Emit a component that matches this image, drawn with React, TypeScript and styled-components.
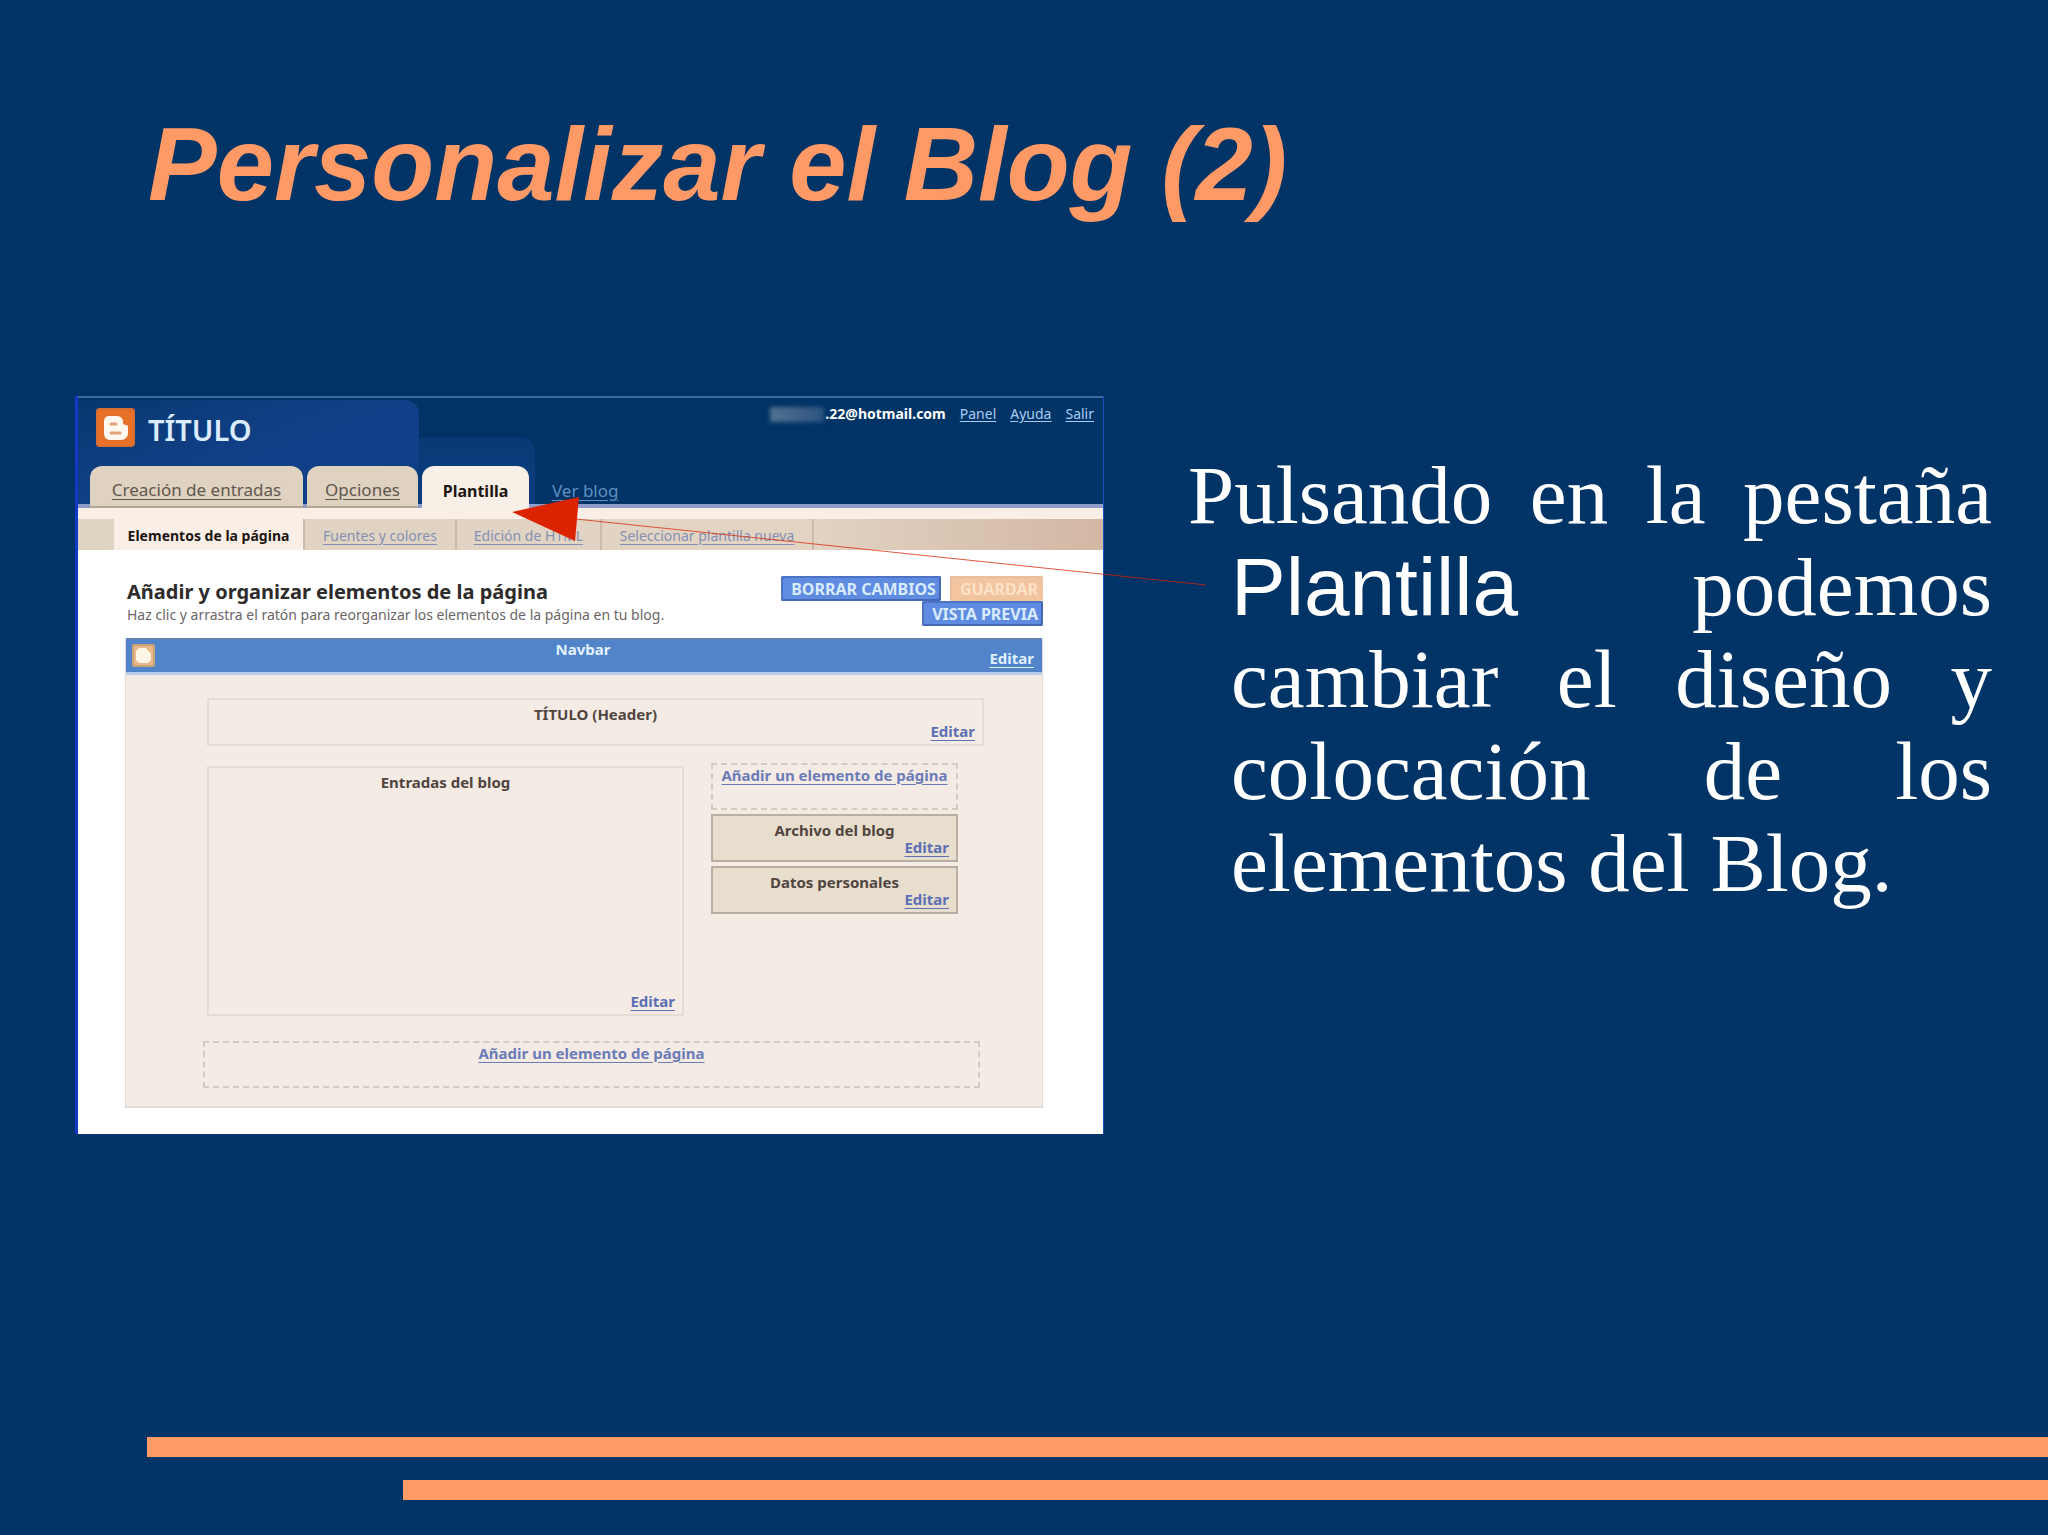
import React from "react";
import styled, { createGlobalStyle, css } from "styled-components";

const GlobalStyle = createGlobalStyle`
  *, *::before, *::after { box-sizing: border-box; }
  body { margin: 0; background: #003366; }
  h1, h2, h3, p { margin: 0; }
`;

const uiFont = `"Noto Sans", "Open Sans", sans-serif`;

const Slide = styled.main`
  display: flex;
  flex-direction: column;
  min-height: 100vh;
  background: #003366;
  overflow: hidden;
`;

const SlideTitle = styled.h1`
  padding: 105px 56px 0 148px;
  color: #ff9966;
  font: italic bold 103px/120px "Liberation Sans", Arial, sans-serif;
`;

const Content = styled.div`
  display: grid;
  grid-template-columns: minmax(0, 1029fr) minmax(0, 804fr);
  column-gap: 84px;
  align-items: start;
  padding: 171px 56px 0 75px;
`;

const Explanation = styled.p`
  margin-top: 53px;
  padding-left: 43px;
  text-indent: -43px;
  text-align: justify;
  color: #ffffff;
  font: 83px/92px "Liberation Serif", "Times New Roman", serif;
`;

const Term = styled.span`
  font-family: "Liberation Sans", Arial, sans-serif;
  font-size: 82px;
  line-height: 1;
`;

const SlideFooter = styled.footer`
  display: flex;
  flex-direction: column;
  gap: 23px;
  margin-top: auto;
  padding: 40px 0 35px 147px;
`;

const Bar = styled.div<{ $inset?: number }>`
  height: 20px;
  margin-left: ${(p) => p.$inset ?? 0}px;
  background: #ff9966;
`;

const Figure = styled.section`
  position: relative;
  border-left: 3px solid #1238c8;
  border-right: 1px solid #1a4fc0;
  background: #ffffff;
  font-family: ${uiFont};
`;

const Arrow = styled.svg`
  position: absolute;
  left: 432px;
  top: 96px;
  width: 700px;
  height: 100px;
  pointer-events: none;
`;

const AppHeader = styled.header`
  position: relative;
  display: flex;
  flex-direction: column;
  justify-content: space-between;
  height: 112px;
  border-top: 2px solid #3f6b9c;
  background: #003366;
  box-shadow: inset 0 -4px 0 #8d9cc9;
  isolation: isolate;
`;

const Glow = styled.span<{ $left: number; $width: number; $top: number; $color: string }>`
  position: absolute;
  z-index: -1;
  left: ${(p) => p.$left}px;
  top: ${(p) => p.$top}px;
  bottom: 4px;
  width: ${(p) => p.$width}px;
  border-top-right-radius: 14px;
  background: ${(p) => p.$color};
`;

const HeaderTop = styled.div`
  display: flex;
  justify-content: space-between;
  align-items: flex-start;
  padding: 0 9px 0 18px;
`;

const Brand = styled.div`
  display: flex;
  align-items: flex-start;
  gap: 13px;
  padding-top: 10px;
`;

const BrandName = styled.h2`
  color: #dcecff;
  font: 600 29px/44px ${uiFont};
`;

const Account = styled.nav`
  display: flex;
  align-items: center;
  gap: 14px;
  padding-top: 6px;
  font-size: 14px;
  line-height: 20px;
`;

const Email = styled.span`
  display: flex;
  align-items: center;
  color: #ffffff;
  font-weight: 700;
`;

const Redacted = styled.span`
  width: 54px;
  height: 15px;
  margin-right: 1px;
  background: linear-gradient(90deg, #527290, #3d6088 60%, #2b5280);
  filter: blur(2px);
`;

const HeaderLink = styled.a`
  color: #a9cdf2;
  text-underline-offset: 2px;
`;

const Tabs = styled.nav`
  display: flex;
  align-items: flex-end;
  gap: 4px;
  padding-left: 12px;
`;

const tabBox = css`
  display: flex;
  align-items: center;
  justify-content: center;
  height: 42px;
  padding-top: 8px;
  font-size: 17px;
  line-height: 24px;
  text-underline-offset: 3px;
`;

const Tab = styled.a<{ $width: number; $active?: boolean }>`
  ${tabBox}
  width: ${(p) => p.$width}px;
  border-radius: 12px 12px 0 0;
  border-bottom: ${(p) => (p.$active ? "0" : "2px solid #b3a695")};
  background: ${(p) => (p.$active ? "#f8efe6" : "#dfd2c0")};
  color: ${(p) => (p.$active ? "#1c1512" : "#5f574f")};
  font-weight: ${(p) => (p.$active ? 700 : 400)};
  font-size: ${(p) => (p.$active ? 16 : 17)}px;
  text-decoration: ${(p) => (p.$active ? "none" : "underline")};
`;

const PlainTab = styled.a`
  ${tabBox}
  padding-left: 19px;
  color: #5f8fc0;
`;

const SubNav = styled.nav`
  display: flex;
  height: 42px;
  padding-left: 36px;
  border-top: 11px solid #faefe6;
  background: linear-gradient(90deg, #dfd3c2 0, #e3d4c4 720px, #d2b7a4 100%);
`;

const SubTab = styled.a<{ $width: number; $active?: boolean }>`
  display: flex;
  align-items: center;
  justify-content: center;
  width: ${(p) => p.$width}px;
  padding-top: 2px;
  border-right: 2px solid #cdbcab;
  background: ${(p) => (p.$active ? "#faefe6" : "transparent")};
  color: ${(p) => (p.$active ? "#1c1512" : "#8390b5")};
  font-size: 14px;
  line-height: 20px;
  font-weight: ${(p) => (p.$active ? 700 : 400)};
  text-decoration: ${(p) => (p.$active ? "none" : "underline")};
  text-underline-offset: 3px;
`;

const Body = styled.div`
  padding: 26px 60px 26px 47px;
`;

const Toolbar = styled.div`
  display: flex;
  justify-content: space-between;
  height: 50px;
  margin-bottom: 12px;
  padding-left: 2px;
`;

const Heading = styled.h3`
  color: #2e2b2b;
  font: 700 20px/32px ${uiFont};
  white-space: nowrap;
`;

const Hint = styled.p`
  color: #6b6666;
  font-size: 14px;
  line-height: 14px;
  white-space: nowrap;
`;

const Actions = styled.div`
  display: flex;
  flex-direction: column;
  align-items: flex-end;
`;

const ActionRow = styled.div`
  display: flex;
  gap: 9px;
`;

const ActionButton = styled.button<{ $muted?: boolean }>`
  height: 25px;
  padding: 0 5px 0 10px;
  border: 0;
  border-radius: 2px;
  background: ${(p) => (p.$muted ? "#f3c4a0" : "#5f8be0")};
  box-shadow: ${(p) =>
    p.$muted ? "inset 2px 2px 0 #e9bd9e" : "inset 2px 2px 0 #4d74c4, inset -2px -2px 0 #4467b8"};
  color: ${(p) => (p.$muted ? "#fbe3c8" : "#d9ecff")};
  font: 700 16px/24px ${uiFont};
  white-space: nowrap;
`;

const Panel = styled.div`
  border: solid #dfdcd8;
  border-width: 0 1px 2px 1px;
  background: #f5ebe5;
`;

const EditLink = styled.a<{ $light?: boolean }>`
  grid-area: 1 / 1;
  align-self: end;
  justify-self: end;
  color: ${(p) => (p.$light ? "#dff0ff" : "#5d70b4")};
  text-underline-offset: 3px;
`;

const BlockTitle = styled.span`
  grid-area: 1 / 1;
  justify-self: center;
  align-self: start;
`;

const blockBase = css`
  display: grid;
  font-size: 15px;
  line-height: 18px;
  font-weight: 700;
`;

const NavbarBlock = styled.div`
  ${blockBase}
  height: 37px;
  padding: 0 8px 5px 6px;
  border-top: 2px solid #6385b5;
  border-bottom: 3px solid #b9cfee;
  background: #5184c9;
  color: #e3f1ff;
`;

const NavbarIcon = styled.svg`
  grid-area: 1 / 1;
  align-self: end;
  width: 23px;
  height: 23px;
`;

const Layout = styled.div`
  padding: 23px 58px 18px 77px;
`;

const Block = styled.div<{ $height: number; $solid?: boolean }>`
  ${blockBase}
  height: ${(p) => p.$height}px;
  padding: 5px 7px 4px;
  border: 2px solid ${(p) => (p.$solid ? "#b8aea2" : "#e6dcd7")};
  background: ${(p) => (p.$solid ? "#e8decd" : "transparent")};
  color: #51453f;
`;

const AddBlock = styled.div`
  display: flex;
  align-items: flex-start;
  justify-content: center;
  height: 47px;
  padding-top: 1px;
  border: 2px dashed #d6cbc0;
  font-size: 15px;
  line-height: 18px;
  font-weight: 700;
`;

const AddLink = styled.a`
  color: #6a7cb8;
  text-underline-offset: 3px;
  white-space: nowrap;
`;

const HeaderSlot = styled.div`
  padding-left: 4px;
`;

const Columns = styled.div`
  display: grid;
  grid-template-columns: minmax(0, 1fr) 247px;
  column-gap: 27px;
  padding: 17px 26px 25px 4px;
`;

const MainColumn = styled.div`
  padding-top: 3px;
`;

const SideColumn = styled.div`
  display: flex;
  flex-direction: column;
  gap: 4px;
`;

const FooterSlot = styled.div`
  padding-right: 4px;
`;

function BloggerLogo() {
  return (
    <svg width="39" height="39" viewBox="0 0 39 39" aria-hidden="true">
      <rect width="39" height="39" rx="4" fill="#e8712a" />
      <rect x="1" y="1" width="37" height="37" rx="3" fill="none" stroke="#c76a3c" strokeWidth="1" />
      <path
        d="M13 8h8c4 0 6 3 6 6 0 2 1 3 3 3s2 1 2 3v5c0 4-3 7-7 7H14c-4 0-6-3-6-7V14c0-4 2-6 5-6z"
        fill="#fff8ee"
      />
      <path d="M15 16h5M15 25h9" stroke="#e2a27c" strokeWidth="3" strokeLinecap="round" />
    </svg>
  );
}

const subTabs = [
  { label: "Elementos de la página", width: 191, active: true },
  { label: "Fuentes y colores", width: 152 },
  { label: "Edición de HTML", width: 145 },
  { label: "Seleccionar plantilla nueva", width: 212 },
];

export default function App() {
  return (
    <Slide>
      <GlobalStyle />
      <SlideTitle>Personalizar el Blog (2)</SlideTitle>
      <Content>
        <Figure>
          <AppHeader>
            <Glow $left={0} $width={341} $top={2} $color="linear-gradient(160deg, #06386f 0%, #113f86 45%, #11408a 75%, #0a3a78 100%)" />
            <Glow $left={341} $width={116} $top={40} $color="linear-gradient(180deg, #083a77, #0c3c7e)" />
            <HeaderTop>
              <Brand>
                <BloggerLogo />
                <BrandName>TÍTULO</BrandName>
              </Brand>
              <Account>
                <Email>
                  <Redacted />
                  .22@hotmail.com
                </Email>
                <HeaderLink href="#panel">Panel</HeaderLink>
                <HeaderLink href="#ayuda">Ayuda</HeaderLink>
                <HeaderLink href="#salir">Salir</HeaderLink>
              </Account>
            </HeaderTop>
            <Tabs>
              <Tab href="#entradas" $width={213}>Creación de entradas</Tab>
              <Tab href="#opciones" $width={111}>Opciones</Tab>
              <Tab href="#plantilla" $width={107} $active>Plantilla</Tab>
              <PlainTab href="#ver">Ver blog</PlainTab>
            </Tabs>
          </AppHeader>
          <SubNav>
            {subTabs.map((t) => (
              <SubTab key={t.label} href="#sub" $width={t.width} $active={t.active}>
                {t.label}
              </SubTab>
            ))}
          </SubNav>
          <Body>
            <Toolbar>
              <div>
                <Heading>Añadir y organizar elementos de la página</Heading>
                <Hint>
                  Haz clic y arrastra el ratón para reorganizar los elementos de la página en tu blog.
                </Hint>
              </div>
              <Actions>
                <ActionRow>
                  <ActionButton type="button">BORRAR CAMBIOS</ActionButton>
                  <ActionButton type="button" $muted>GUARDAR</ActionButton>
                </ActionRow>
                <ActionButton type="button">VISTA PREVIA</ActionButton>
              </Actions>
            </Toolbar>
            <Panel>
              <NavbarBlock>
                <NavbarIcon viewBox="0 0 23 23" aria-hidden="true">
                  <rect width="23" height="23" rx="2" fill="#c9a27c" />
                  <rect x="2" y="2" width="19" height="19" rx="2" fill="#e9b98c" />
                  <path d="M7 4h7l5 6v6l-3 3H7l-3-3V7z" fill="#fff6e6" />
                </NavbarIcon>
                <BlockTitle>Navbar</BlockTitle>
                <EditLink href="#editar" $light>Editar</EditLink>
              </NavbarBlock>
              <Layout>
                <HeaderSlot>
                  <Block $height={48}>
                    <BlockTitle>TÍTULO (Header)</BlockTitle>
                    <EditLink href="#editar">Editar</EditLink>
                  </Block>
                </HeaderSlot>
                <Columns>
                  <MainColumn>
                    <Block $height={250}>
                      <BlockTitle>Entradas del blog</BlockTitle>
                      <EditLink href="#editar">Editar</EditLink>
                    </Block>
                  </MainColumn>
                  <SideColumn>
                    <AddBlock>
                      <AddLink href="#agregar">Añadir un elemento de página</AddLink>
                    </AddBlock>
                    <Block $height={48} $solid>
                      <BlockTitle>Archivo del blog</BlockTitle>
                      <EditLink href="#editar">Editar</EditLink>
                    </Block>
                    <Block $height={48} $solid>
                      <BlockTitle>Datos personales</BlockTitle>
                      <EditLink href="#editar">Editar</EditLink>
                    </Block>
                  </SideColumn>
                </Columns>
                <FooterSlot>
                  <AddBlock>
                    <AddLink href="#agregar">Añadir un elemento de página</AddLink>
                  </AddBlock>
                </FooterSlot>
              </Layout>
            </Panel>
          </Body>
          <Arrow viewBox="0 0 700 100" aria-hidden="true">
            <path d="M66 27L696 93" stroke="#dc2300" strokeWidth="1" strokeOpacity="0.75" />
            <path d="M2 20L69 5L65 49Z" fill="#dc2300" />
          </Arrow>
        </Figure>
        <Explanation>
          Pulsando en la pestaña <Term>Plantilla</Term> podemos cambiar el diseño y colocación de los
          elementos del Blog.
        </Explanation>
      </Content>
      <SlideFooter>
        <Bar />
        <Bar $inset={256} />
      </SlideFooter>
    </Slide>
  );
}
